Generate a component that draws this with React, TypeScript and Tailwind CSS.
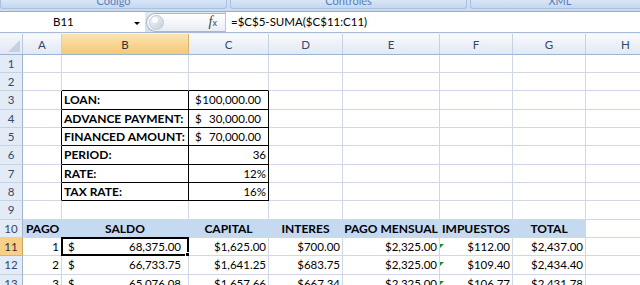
import React from 'react';

type Kind = 'label' | 'acct' | 'right' | 'head' | 'left' | 'none';
type Cl = { v?: string; k?: Kind };

const W = ['w-[39px]', 'w-[127px]', 'w-[80px]', 'w-[74px]', 'w-[97px]', 'w-[73px]', 'w-[73px]', 'w-[80px]'];
const LETTERS = ['A', 'B', 'C', 'D', 'E', 'F', 'G', 'H'];
const RH = ['h-[18px]', 'h-[18px]', 'h-[19px]', 'h-[18px]', 'h-[18px]', 'h-[19px]', 'h-[18px]', 'h-[18px]', 'h-[19px]', 'h-[18px]', 'h-[18px]', 'h-[19px]', 'h-[18px]'];

const E: Cl = {};
const blank = (): Cl[] => [E, E, E, E, E, E, E, E];

const ROWS: Cl[][] = [
  blank(),
  blank(),
  [E, { v: 'LOAN:', k: 'label' }, { v: '100,000.00', k: 'acct' }, E, E, E, E, E],
  [E, { v: 'ADVANCE PAYMENT:', k: 'label' }, { v: '30,000.00', k: 'acct' }, E, E, E, E, E],
  [E, { v: 'FINANCED AMOUNT:', k: 'label' }, { v: '70,000.00', k: 'acct' }, E, E, E, E, E],
  [E, { v: 'PERIOD:', k: 'label' }, { v: '36', k: 'right' }, E, E, E, E, E],
  [E, { v: 'RATE:', k: 'label' }, { v: '12%', k: 'right' }, E, E, E, E, E],
  [E, { v: 'TAX RATE:', k: 'label' }, { v: '16%', k: 'right' }, E, E, E, E, E],
  blank(),
  [
    { v: 'PAGO', k: 'left' },
    { v: 'SALDO', k: 'head' },
    { v: 'CAPITAL', k: 'head' },
    { v: 'INTERES', k: 'head' },
    { v: 'PAGO MENSUAL', k: 'head' },
    { v: 'IMPUESTOS', k: 'head' },
    { v: 'TOTAL', k: 'head' },
    E,
  ],
  [
    { v: '1', k: 'right' },
    { v: '68,375.00', k: 'acct' },
    { v: '$1,625.00', k: 'right' },
    { v: '$700.00', k: 'right' },
    { v: '$2,325.00', k: 'right' },
    { v: '$112.00', k: 'right' },
    { v: '$2,437.00', k: 'right' },
    E,
  ],
  [
    { v: '2', k: 'right' },
    { v: '66,733.75', k: 'acct' },
    { v: '$1,641.25', k: 'right' },
    { v: '$683.75', k: 'right' },
    { v: '$2,325.00', k: 'right' },
    { v: '$109.40', k: 'right' },
    { v: '$2,434.40', k: 'right' },
    E,
  ],
  [
    { v: '3', k: 'right' },
    { v: '65,076.08', k: 'acct' },
    { v: '$1,657.66', k: 'right' },
    { v: '$667.34', k: 'right' },
    { v: '$2,325.00', k: 'right' },
    { v: '$106.77', k: 'right' },
    { v: '$2,431.78', k: 'right' },
    E,
  ],
];

function CellBox({ c, r, col }: { c: Cl; r: number; col: number }) {
  const tableRow = r >= 3 && r <= 8;
  const fill = r === 10 && col <= 6;
  const rightBlack = tableRow && col <= 2;
  const bottomBlack = r >= 2 && r <= 8 && (col === 1 || col === 2);
  const rb = rightBlack ? 'border-r-black' : fill ? 'border-r-[#c5d9f1]' : 'border-r-[#d0d8e4]';
  const bb = bottomBlack ? 'border-b-black' : fill ? 'border-b-[#c5d9f1]' : 'border-b-[#d0d8e4]';
  const bg = fill ? 'bg-[#c5d9f1]' : 'bg-white';
  const selected = r === 11 && col === 1;
  const tri = col === 5 && r >= 11;

  let inner: React.ReactNode = null;
  if (c.k === 'label') {
    inner = <span className="pl-[2px] font-bold text-[12px] whitespace-nowrap">{c.v}</span>;
  } else if (c.k === 'acct') {
    inner = (
      <div className="flex w-full justify-between pl-[6px] pr-[7px] text-[11.5px]">
        <span>$</span>
        <span>{c.v}</span>
      </div>
    );
  } else if (c.k === 'right') {
    inner = <span className="ml-auto pr-[2px] text-[11.5px] whitespace-nowrap">{c.v}</span>;
  } else if (c.k === 'head') {
    inner = <span className="mx-auto font-bold text-[12px] whitespace-nowrap">{c.v}</span>;
  } else if (c.k === 'left') {
    inner = <span className="pl-[3px] font-bold text-[12px] whitespace-nowrap">{c.v}</span>;
  }

  return (
    <div
      className={`${W[col]} shrink-0 border-r border-b ${rb} ${bb} ${bg} flex items-center leading-[14px] text-black relative`}
    >
      {inner}
      {selected && (
        <>
          <div className="absolute -left-[1px] -top-[1px] -right-[1px] -bottom-[1px] border-2 border-black pointer-events-none" />
          <div className="absolute -right-[3px] -bottom-[3px] w-[5px] h-[5px] bg-black outline outline-1 outline-white" />
        </>
      )}
      {tri && (
        <div className="absolute left-0 top-[6px] w-0 h-0 border-t-[4px] border-r-[4px] border-t-[#1e8a2e] border-r-transparent" />
      )}
    </div>
  );
}

function RibbonGroup({ w, label }: { w: string; label: string }) {
  return (
    <div
      className={`${w} h-[9px] shrink-0 rounded-b-[3px] border border-t-0 border-[#a9c0df] bg-gradient-to-b from-[#d9e6f6] to-[#c4d8f0] overflow-hidden flex justify-center`}
    >
      <span className="text-[11px] leading-[11px] -mt-[5px] text-[#5a7fb8]">{label}</span>
    </div>
  );
}

export default function App() {
  return (
    <div className="w-[640px] h-[285px] overflow-hidden bg-white flex flex-col font-['Lato',sans-serif]">
      {/* Ribbon tail */}
      <div className="h-[12px] shrink-0 bg-gradient-to-b from-[#d4e2f3] to-[#c9dbef] border-b border-[#93add3] flex gap-[3px] overflow-hidden">
        <RibbonGroup w="w-[227px]" label="Código" />
        <RibbonGroup w="w-[237px]" label="Controles" />
        <RibbonGroup w="w-[180px]" label="XML" />
      </div>

      {/* Formula bar */}
      <div className="h-[21px] shrink-0 flex bg-gradient-to-b from-[#dfe9f5] to-[#d3e1f1] border-b border-[#a7bbd6]">
        <div className="w-[145px] shrink-0 bg-white flex items-center relative">
          <span className="absolute left-[53px] text-[11.5px] leading-[14px] text-black">B11</span>
          <div className="absolute left-[134px] top-[10px] w-0 h-0 border-l-[3px] border-r-[3px] border-t-[3px] border-l-transparent border-r-transparent border-t-black" />
        </div>
        <div className="w-[80px] shrink-0 flex items-center pl-[1px]">
          <div className="h-[19px] w-full rounded-l-full border border-r-0 border-[#aab7c8] bg-gradient-to-b from-white to-[#e9edf2] flex items-center pl-[2px]">
            <div className="w-[15px] h-[15px] rounded-full bg-gradient-to-br from-[#f4f6f9] to-[#c7cfda] border border-[#c1cad6] flex items-center justify-center">
              <div className="w-[6px] h-[6px] rounded-full bg-white/80 -translate-x-[2px] -translate-y-[2px]" />
            </div>
            <span className="ml-auto mr-[8px] font-['Liberation_Serif',serif] italic text-[14px] leading-[14px] text-[#444]">
              f<span className="text-[9px] not-italic font-['Liberation_Sans',sans-serif]">x</span>
            </span>
          </div>
        </div>
        <div className="flex-1 bg-white border-l border-[#b7c6d9] flex items-center pl-[5px]">
          <span className="text-[11.5px] leading-[14px] text-black">=$C$5-SUMA($C$11:C11)</span>
        </div>
      </div>

      <div className="h-[1px] shrink-0 bg-[#eef3f9]" />

      {/* Column headers */}
      <div className="h-[21px] shrink-0 flex border-b border-[#9db4d2]">
        <div className="w-[23px] shrink-0 border-r border-[#b9c8dc] bg-gradient-to-b from-[#f4f7fb] to-[#e1e8f2] relative overflow-hidden">
          <div className="absolute right-[2px] bottom-[2px] w-[12px] h-[12px] bg-[#c3d1e3] [clip-path:polygon(100%_0,100%_100%,0_100%)]" />
        </div>
        {LETTERS.map((l, i) => (
          <div
            key={l}
            className={`${W[i]} shrink-0 border-r flex items-center justify-center pt-[2px] text-[11.5px] leading-[14px] ${
              i === 1
                ? 'bg-gradient-to-b from-[#fbe3b4] to-[#f5c874] border-[#d9b46a] text-[#333]'
                : 'bg-gradient-to-b from-[#f8fafd] to-[#e2e9f2] border-[#c7d2e1] text-[#34486a]'
            }`}
          >
            {l}
          </div>
        ))}
      </div>

      {/* Rows */}
      {ROWS.map((row, ri) => {
        const r = ri + 1;
        return (
          <div key={r} className={`${RH[ri]} shrink-0 flex`}>
            <div
              className={`w-[23px] shrink-0 border-r border-b flex items-center justify-center text-[11.5px] leading-[14px] ${
                r === 11
                  ? 'bg-[#f7cf86] border-r-[#c9a55a] border-b-[#d8b56c] text-[#333]'
                  : 'bg-[#e3ebf6] border-r-[#9eb6ce] border-b-[#c6d3e4] text-[#34486a]'
              }`}
            >
              {r}
            </div>
            {row.map((c, ci) => (
              <CellBox key={ci} c={c} r={r} col={ci} />
            ))}
          </div>
        );
      })}
    </div>
  );
}
